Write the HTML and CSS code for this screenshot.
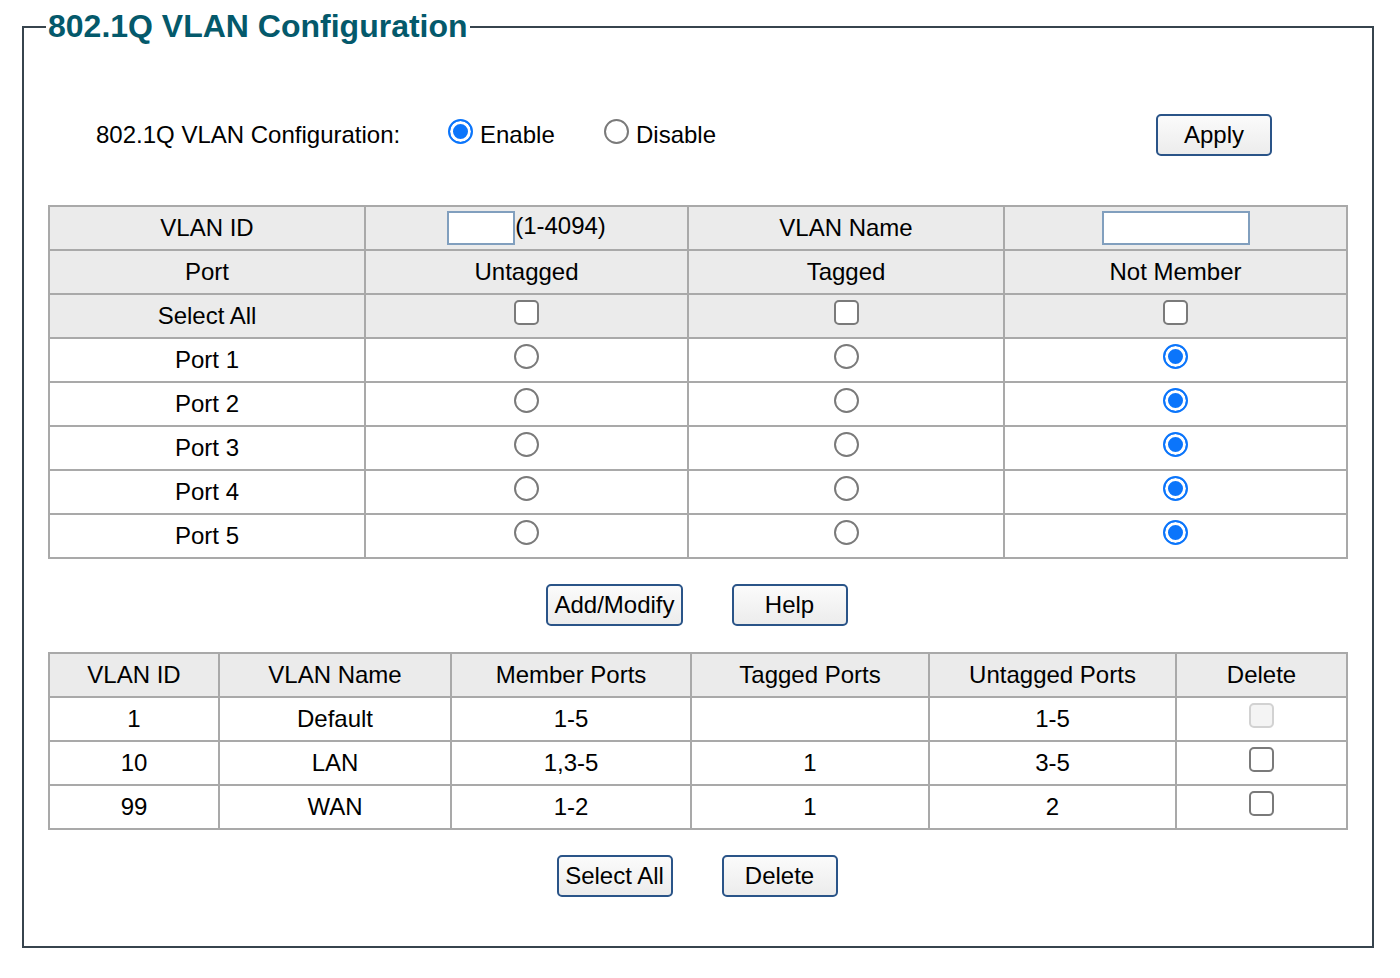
FILE: index.html
```html
<!DOCTYPE html>
<html>
<head>
<meta charset="utf-8">
<title>802.1Q VLAN Configuration</title>
<link rel="stylesheet" href="styles.css">
</head>
<body>
<fieldset class="panel">
  <legend class="panel-title">802.1Q VLAN Configuration</legend>

  <div class="mode-row">
    <span class="mode-label">802.1Q VLAN Configuration:</span>
    <label class="mode-opt mode-enable"><input type="radio" name="mode" class="radio" checked> Enable</label>
    <label class="mode-opt"><input type="radio" name="mode" class="radio"> Disable</label>
    <button class="btn btn-apply">Apply</button>
  </div>

  <table class="grid grid-ports">
    <colgroup>
      <col class="c316"><col class="c323"><col class="c316"><col class="c343">
    </colgroup>
    <tr class="shade">
      <td>VLAN ID</td>
      <td><input type="text" class="txt txt-id">(1-4094)</td>
      <td>VLAN Name</td>
      <td><input type="text" class="txt txt-name"></td>
    </tr>
    <tr class="shade">
      <td>Port</td><td>Untagged</td><td>Tagged</td><td>Not Member</td>
    </tr>
    <tr class="shade">
      <td>Select All</td>
      <td><input type="checkbox" class="check"></td>
      <td><input type="checkbox" class="check"></td>
      <td><input type="checkbox" class="check"></td>
    </tr>
    <tr>
      <td>Port 1</td>
      <td><input type="radio" name="p1" class="radio"></td>
      <td><input type="radio" name="p1" class="radio"></td>
      <td><input type="radio" name="p1" class="radio" checked></td>
    </tr>
    <tr>
      <td>Port 2</td>
      <td><input type="radio" name="p2" class="radio"></td>
      <td><input type="radio" name="p2" class="radio"></td>
      <td><input type="radio" name="p2" class="radio" checked></td>
    </tr>
    <tr>
      <td>Port 3</td>
      <td><input type="radio" name="p3" class="radio"></td>
      <td><input type="radio" name="p3" class="radio"></td>
      <td><input type="radio" name="p3" class="radio" checked></td>
    </tr>
    <tr>
      <td>Port 4</td>
      <td><input type="radio" name="p4" class="radio"></td>
      <td><input type="radio" name="p4" class="radio"></td>
      <td><input type="radio" name="p4" class="radio" checked></td>
    </tr>
    <tr>
      <td>Port 5</td>
      <td><input type="radio" name="p5" class="radio"></td>
      <td><input type="radio" name="p5" class="radio"></td>
      <td><input type="radio" name="p5" class="radio" checked></td>
    </tr>
  </table>

  <div class="btn-row">
    <button class="btn">Add/Modify</button>
    <button class="btn">Help</button>
  </div>

  <table class="grid grid-list">
    <colgroup>
      <col class="c170"><col class="c232"><col class="c240"><col class="c238"><col class="c247"><col class="c171">
    </colgroup>
    <tr class="shade">
      <td>VLAN ID</td><td>VLAN Name</td><td>Member Ports</td><td>Tagged Ports</td><td>Untagged Ports</td><td>Delete</td>
    </tr>
    <tr>
      <td>1</td><td>Default</td><td>1-5</td><td></td><td>1-5</td>
      <td><input type="checkbox" class="check" disabled></td>
    </tr>
    <tr>
      <td>10</td><td>LAN</td><td>1,3-5</td><td>1</td><td>3-5</td>
      <td><input type="checkbox" class="check"></td>
    </tr>
    <tr>
      <td>99</td><td>WAN</td><td>1-2</td><td>1</td><td>2</td>
      <td><input type="checkbox" class="check"></td>
    </tr>
  </table>

  <div class="btn-row btn-row-last">
    <button class="btn">Select All</button>
    <button class="btn">Delete</button>
  </div>
</fieldset>
</body>
</html>
```

FILE: styles.css
```css
html, body {
  margin: 0;
  padding: 0;
  background: #ffffff;
}

body {
  font-family: "Liberation Sans", Arial, Helvetica, sans-serif;
  font-size: 24px;
  color: #000;
}

.panel {
  box-sizing: border-box;
  width: 1352px;
  margin: 8px 0 0 22px;
  padding: 0 24px 0 24px;
  border: 2px solid #37444d;
  min-width: 0;
}

.panel-title {
  font-size: 32px;
  font-weight: bold;
  color: #04596b;
  padding: 0 2px;
  margin-left: -2px;
  line-height: 37px;
}

.mode-row {
  display: flex;
  align-items: center;
  height: 42px;
  margin-top: 69px;
}

.mode-label {
  width: 352px;
  padding-left: 48px;
}

.mode-opt {
  display: flex;
  align-items: center;
  gap: 7px;
}

.mode-opt .radio {
  margin-bottom: 7px;
}

.mode-enable {
  width: 156px;
}

.btn-apply {
  margin-left: auto;
  margin-right: 76px;
}

.btn {
  box-sizing: border-box;
  height: 42px;
  min-width: 116px;
  padding: 0 6px;
  font-family: inherit;
  font-size: 24px;
  color: #000;
  border: 2px solid #2a5488;
  border-radius: 5px;
  background: linear-gradient(#fbfbfb, #ececec);
}

.radio,
.check {
  -webkit-appearance: none;
  appearance: none;
  box-sizing: border-box;
  width: 25px;
  height: 25px;
  margin: 0;
  border: 2px solid #7a7a7a;
  background: #fff;
  vertical-align: middle;
}

.radio {
  border-radius: 50%;
}

.radio:checked {
  border-color: #0b75fb;
  background: #0b75fb;
  box-shadow: inset 0 0 0 3px #fff;
}

.check {
  border-radius: 5px;
}

.check:disabled {
  border-color: #d2d2d2;
  background: #f4f4f4;
}

.grid {
  border-collapse: collapse;
  table-layout: fixed;
  width: 1298px;
  margin-left: 0;
}

.grid td {
  height: 42px;
  padding: 0;
  border: 2px solid #a9a9a9;
  text-align: center;
  vertical-align: middle;
}

.grid td .radio,
.grid td .check {
  margin-bottom: 7px;
}

.shade td {
  background: #ebebeb;
}

.grid-ports {
  margin-top: 49px;
}

.txt {
  box-sizing: border-box;
  height: 34px;
  margin: 0;
  border: 2px solid #819fbe;
  background: #fff;
  vertical-align: middle;
  font-family: inherit;
  font-size: 20px;
}

.txt-id {
  width: 68px;
}

.txt-name {
  width: 148px;
}

.c316 { width: 316px; }
.c323 { width: 323px; }
.c343 { width: 343px; }
.c170 { width: 170px; }
.c232 { width: 232px; }
.c240 { width: 240px; }
.c238 { width: 238px; }
.c247 { width: 247px; }
.c171 { width: 171px; }

.btn-row {
  display: flex;
  justify-content: center;
  gap: 49px;
  width: 1298px;
  margin: 25px 0 26px;
}

.btn-row-last {
  margin: 25px 0 49px;
}
```
